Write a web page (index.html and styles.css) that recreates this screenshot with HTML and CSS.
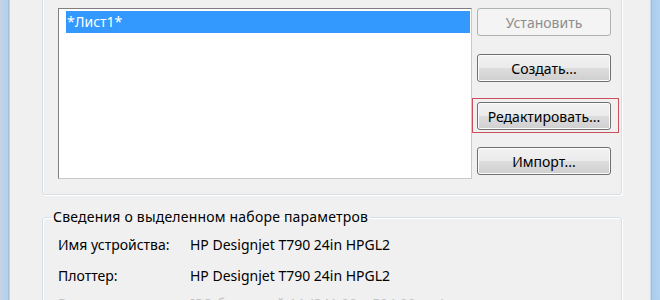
FILE: index.html
```html
<!DOCTYPE html>
<html>

<head>
  <title>Диспетчер параметров листов</title>
  <link rel="stylesheet" href="styles.css">
</head>

<body>
  <div class="window">
    <div class="frame frame-left"></div>

    <div class="client">
      <div class="group sets">
        <div class="listbox">
          <div class="item selected">*Лист1*</div>
        </div>
        <div class="buttons">
          <button disabled>Установить</button>
          <button>Создать...</button>
          <div class="mark">
            <button>Редактировать...</button>
          </div>
          <button>Импорт...</button>
        </div>
      </div>

      <fieldset class="group details">
        <legend>Сведения о выделенном наборе параметров</legend>
        <div class="row">
          <span class="label">Имя устройства:</span>
          <span class="value">HP Designjet T790 24in HPGL2</span>
        </div>
        <div class="row">
          <span class="label">Плоттер:</span>
          <span class="value">HP Designjet T790 24in HPGL2</span>
        </div>
        <div class="row faded">
          <span class="label">Размер листа:</span>
          <span class="value">ISO без полей A1 (841.00 x 594.00 мм)</span>
        </div>
      </fieldset>
    </div>

    <div class="frame frame-right"></div>
  </div>
</body>

</html>
```

FILE: styles.css
```css
body {
  margin: 0;
  font-family: "Noto Sans", "Open Sans", sans-serif;
  font-size: 14px;
  color: #000;
  background: #f0f0f0;
  overflow: hidden;
}

.window {
  display: flex;
  height: 300px;
}

.frame {
  width: 10px;
  flex-shrink: 0;
}

.frame-left {
  background: linear-gradient(to right, #c6d3e2 0, #c6d3e2 2px, #b9d3ee 3px, #b4d0ee 8px, #94aac4 9px, #fbfbfb 10px);
}

.frame-right {
  background: linear-gradient(to right, #ffffff 0, #9fb3c9 1px, #a9cbee 2px, #b3d3f2 10px);
}

.client {
  flex: 1;
  padding: 0 28px 0 32px;
  background: #f0f0f0;
}

.group {
  border: 1px solid #d5dfe5;
  box-shadow: inset 1px 1px 0 #fff, 1px 1px 0 #fff;
  border-radius: 3px;
}

.sets {
  display: flex;
  align-items: flex-start;
  gap: 5px;
  margin-top: -30px;
  padding: 37px 10px 15px 15px;
}

.listbox {
  flex: 1;
  height: 167px;
  padding: 2px 1px 0 7px;
  background: #fff;
  border: 1px solid;
  border-color: #7f7f7f #c9c9c9 #c9c9c9 #7f7f7f;
}

.item {
  height: 22px;
  line-height: 22px;
  padding-left: 1px;
}

.selected {
  background: #3399ff;
  color: #fff;
}

.buttons {
  width: 134px;
  display: flex;
  flex-direction: column;
}

button {
  height: 28px;
  margin-bottom: 18px;
  padding: 0;
  font: inherit;
  color: #000;
  border: 1px solid #707070;
  border-radius: 3px;
  background: linear-gradient(#f2f2f2 0, #ebebeb 50%, #dddddd 51%, #cfcfcf 100%);
  box-shadow: inset 0 0 0 1px #fcfcfc;
}

button:last-child {
  margin-bottom: 0;
}

button:disabled {
  color: #8e8e8e;
  border-color: #adb2b5;
  background: #f4f4f4;
  box-shadow: none;
}

.mark {
  margin: -2px -8px 14px -5px;
  padding: 3px 7px 2px 4px;
  border: 1px solid #c94f5c;
}

.mark button {
  width: 100%;
  margin: 0;
}

.details {
  margin: 13px 0 0;
  padding: 3px 10px 0 15px;
  min-width: 0;
}

.details legend {
  margin-left: -7px;
  padding: 0 2px;
  line-height: 18px;
  letter-spacing: 0.2px;
}

.row {
  display: flex;
  height: 31px;
  line-height: 31px;
}

.label {
  width: 132px;
}

.faded {
  color: #c4c4c4;
  line-height: 26px;
}
```
